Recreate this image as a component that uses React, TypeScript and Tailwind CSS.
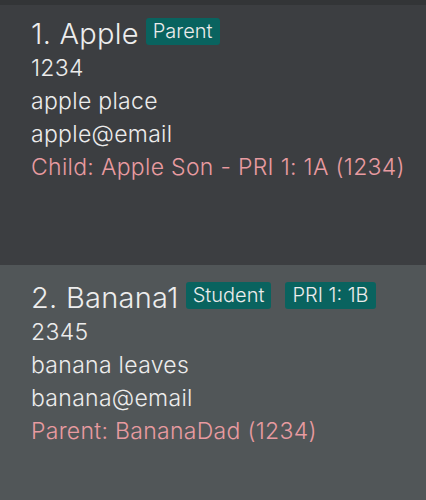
import React from "react";

interface Person {
    index: number;
    name: string;
    tags: string[];
    phone: string;
    address: string;
    email: string;
    relation: string;
}

const people: Person[] = [
    {
        index: 1,
        name: "Apple",
        tags: ["Parent"],
        phone: "1234",
        address: "apple place",
        email: "apple@email",
        relation: "Child: Apple Son - PRI 1: 1A (1234)",
    },
    {
        index: 2,
        name: "Banana1",
        tags: ["Student", "PRI 1: 1B"],
        phone: "2345",
        address: "banana leaves",
        email: "banana@email",
        relation: "Parent: BananaDad (1234)",
    },
];

const PersonCard: React.FC<{ person: Person; className: string }> = ({ person, className }) => {
    return (
        <div className={`px-[31px] overflow-hidden ${className}`}>
            <div className="flex items-start gap-[7px]">
                <span className="text-[29px] leading-[32px] tracking-[0.25px] text-[#ededed] whitespace-nowrap">
                    {person.index}. {person.name}
                </span>
                <div className="flex gap-[14px]">
                    {person.tags.map((tag) => (
                        <span
                            key={tag}
                            className="h-[27px] px-[7px] rounded-[3px] bg-[#09635f] text-[20px] leading-[27px] text-[#ececec] whitespace-nowrap"
                        >
                            {tag}
                        </span>
                    ))}
                </div>
            </div>
            <div className="mt-[2px] text-[23px] leading-[33px] tracking-[0.3px] text-[#ececec] whitespace-nowrap">
                <div>{person.phone}</div>
                <div>{person.address}</div>
                <div>{person.email}</div>
                <div className="text-[#e89ba0]">{person.relation}</div>
            </div>
        </div>
    );
};

export default function App() {
    return (
        <div className="w-[426px] h-[500px] overflow-hidden bg-[#515658] font-['Inter',sans-serif] font-light">
            <div className="h-[5px] bg-[#333537]" />
            <PersonCard person={people[0]} className="h-[260px] pt-[13px] bg-[#3c3e41]" />
            <PersonCard person={people[1]} className="h-[235px] pt-[17px] bg-[#515658]" />
        </div>
    );
}
